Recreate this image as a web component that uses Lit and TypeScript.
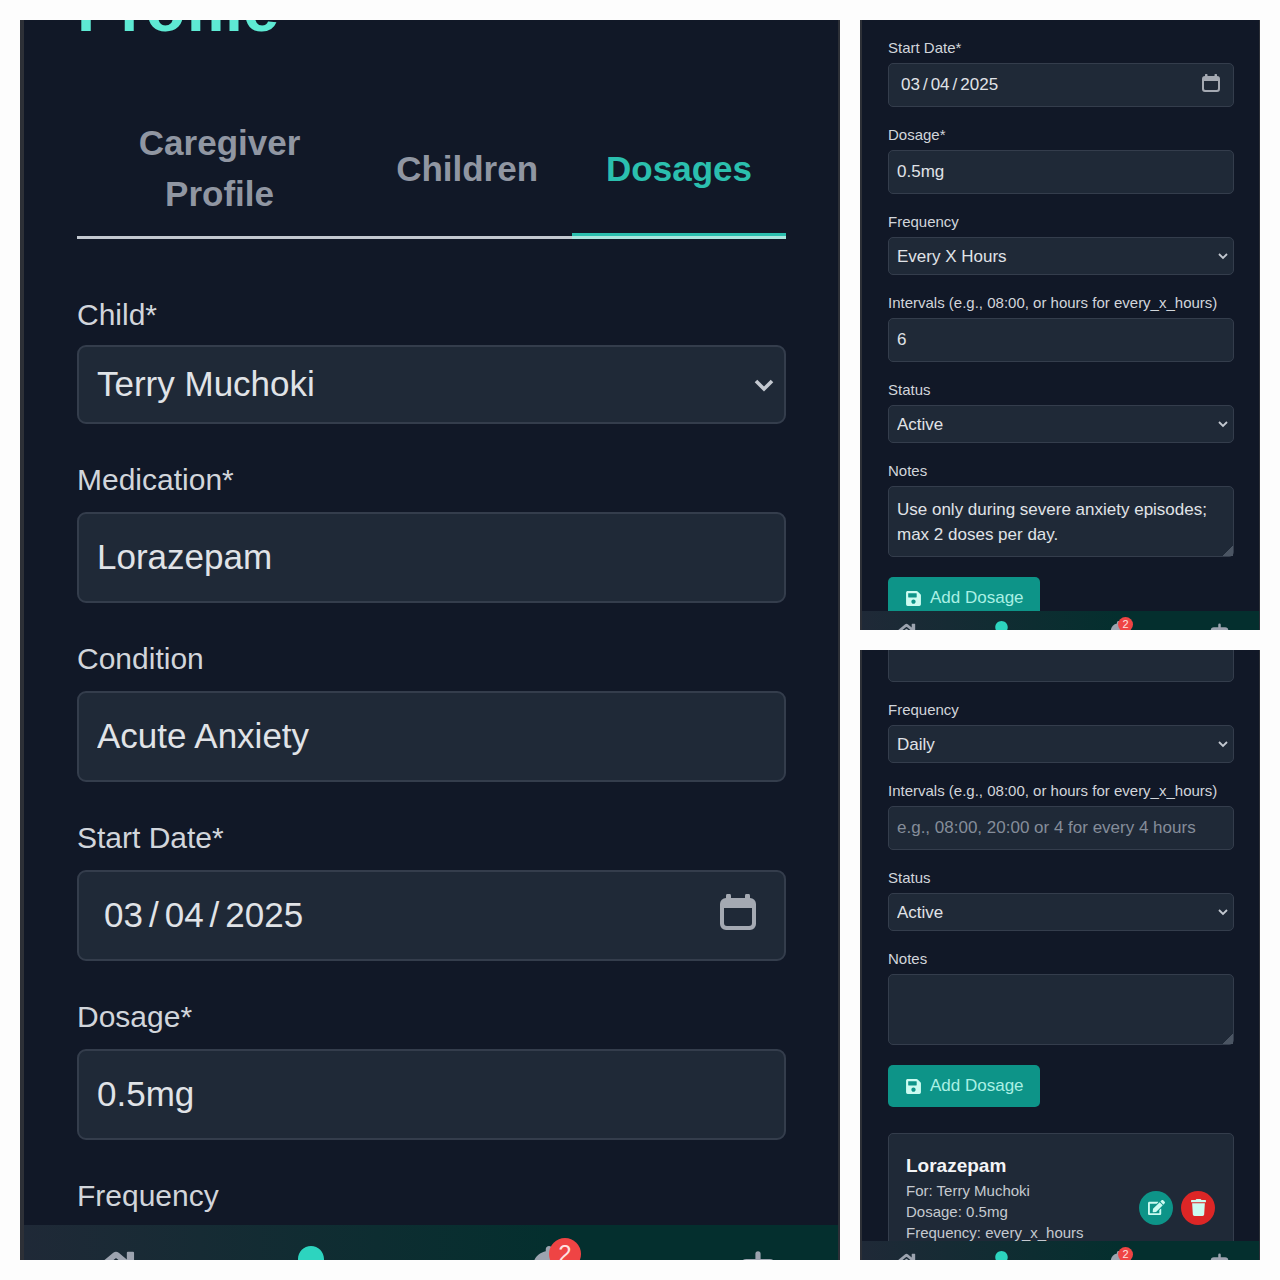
import { LitElement, html, css, nothing, type TemplateResult } from "lit";
import { customElement, property } from "lit/decorators.js";

interface Field {
  id: string;
  label: string;
  kind: "text" | "date" | "select" | "textarea";
  value?: string;
  placeholder?: string;
  hideLabel?: boolean;
}

const icon = (box: string, path: string, cls = "icon") => html`
  <svg class=${cls} viewBox=${box} aria-hidden="true"><path fill="currentColor" fill-rule="evenodd" d=${path} /></svg>
`;

const HOME =
  "M280.37 148.26L96 300.11V464a16 16 0 0 0 16 16l112.06-.29a16 16 0 0 0 15.92-16V368a16 16 0 0 1 16-16h64a16 16 0 0 1 16 16v95.64a16 16 0 0 0 16 16.05L464 480a16 16 0 0 0 16-16V300L295.67 148.26a12.19 12.19 0 0 0-15.3 0zM571.6 251.47L488 182.56V44.05a12 12 0 0 0-12-12h-56a12 12 0 0 0-12 12v72.61L318.47 43a48 48 0 0 0-61 0L4.34 251.47a12 12 0 0 0-1.6 16.9l25.5 31A12 12 0 0 0 45.15 301l235.22-193.74a12.19 12.19 0 0 1 15.3 0L530.9 301a12 12 0 0 0 16.9-1.6l25.5-31a12 12 0 0 0-1.7-16.93z";
const USER =
  "M224 256c70.7 0 128-57.3 128-128S294.7 0 224 0 96 57.3 96 128s57.3 128 128 128zm89.6 32h-16.7c-22.2 10.2-46.9 16-72.9 16s-50.6-5.8-72.9-16h-16.7C60.2 288 0 348.2 0 422.4V464c0 26.5 21.5 48 48 48h352c26.5 0 48-21.5 48-48v-41.6c0-74.2-60.2-134.4-134.4-134.4z";
const BELL =
  "M224 512c35.32 0 63.97-28.65 63.97-64H160.03c0 35.35 28.65 64 63.97 64zm215.39-149.71c-19.32-20.76-55.47-51.99-55.47-154.29 0-77.7-54.48-139.9-127.94-155.16V32c0-17.67-14.32-32-31.98-32s-31.98 14.33-31.98 32v20.84C118.56 68.1 64.08 130.3 64.08 208c0 102.3-36.15 133.53-55.47 154.29-6 6.45-8.66 14.16-8.61 21.71.11 16.4 12.98 32 32.1 32h383.8c19.12 0 32-15.6 32.1-32 .05-7.55-2.61-15.27-8.61-21.71z";
const ROBOT =
  "M32 224H64V416H32A32 32 0 0 1 0 384V256A32 32 0 0 1 32 224ZM544 176V448a64 64 0 0 1-64 64H160a64 64 0 0 1-64-64V176a80 80 0 0 1 80-80H288V32a32 32 0 0 1 64 0V96H464A80 80 0 0 1 544 176ZM264 256a40 40 0 1 0-80 0 40 40 0 1 0 80 0ZM456 256a40 40 0 1 0-80 0 40 40 0 1 0 80 0ZM192 384h64v32h-64ZM288 384h64v32h-64ZM384 384h64v32h-64ZM640 256V384a32 32 0 0 1-32 32H576V224h32A32 32 0 0 1 640 256Z";
const SAVE =
  "M433.941 129.941l-83.882-83.882A48 48 0 0 0 316.118 32H48C21.49 32 0 53.49 0 80v352c0 26.51 21.49 48 48 48h352c26.51 0 48-21.49 48-48V163.882a48 48 0 0 0-14.059-33.941zM224 416c-35.346 0-64-28.654-64-64 0-35.346 28.654-64 64-64s64 28.654 64 64c0 35.346-28.654 64-64 64zm96-304.52V212c0 6.627-5.373 12-12 12H76c-6.627 0-12-5.373-12-12V108c0-6.627 5.373-12 12-12h228.52c3.183 0 6.235 1.264 8.485 3.515l3.48 3.48A11.996 11.996 0 0 1 320 111.48z";
const EDIT =
  "M402.6 83.2l90.2 90.2c3.8 3.8 3.8 10 0 13.8L274.4 405.6l-92.8 10.3c-12.4 1.4-22.9-9.1-21.5-21.5l10.3-92.8L388.8 83.2c3.8-3.8 10-3.8 13.8 0zm162-22.9l-48.8-48.8c-15.2-15.2-39.9-15.2-55.2 0l-35.4 35.4c-3.8 3.8-3.8 10 0 13.8l90.2 90.2c3.8 3.8 10 3.8 13.8 0l35.4-35.4c15.2-15.3 15.2-40 0-55.2zM384 346.2V448H64V128h229.8c3.2 0 6.2-1.3 8.5-3.5l40-40c7.6-7.6 2.2-20.5-8.5-20.5H48C21.5 64 0 85.5 0 112v352c0 26.5 21.5 48 48 48h352c26.5 0 48-21.5 48-48V306.2c0-10.7-12.9-16-20.5-8.5l-40 40c-2.2 2.3-3.5 5.3-3.5 8.5z";
const TRASH =
  "M432 32H312l-9.4-18.7A24 24 0 0 0 281.1 0H166.8a23.72 23.72 0 0 0-21.4 13.3L136 32H16A16 16 0 0 0 0 48v32a16 16 0 0 0 16 16h416a16 16 0 0 0 16-16V48a16 16 0 0 0-16-16zM53.2 467a48 48 0 0 0 47.9 45h245.8a48 48 0 0 0 47.9-45L416 128H32z";
const CALENDAR =
  "M6 2a2 2 0 0 1 5 0V4H25V2a2 2 0 0 1 5 0V4a6 6 0 0 1 6 6V30a6 6 0 0 1-6 6H6a6 6 0 0 1-6-6V10a6 6 0 0 1 6-6ZM4 14V29a3 3 0 0 0 3 3H29a3 3 0 0 0 3-3V14Z";

/* One phone screen: a slot for scrolled content above the bottom bar. */
@customElement("phone-screen")
class PhoneScreen extends LitElement {
  static styles = css`
    :host {
      display: flex;
      flex-direction: column;
      min-width: 0;
      min-height: 0;
      overflow: hidden;
      box-sizing: border-box;
      background: #111827;
      border-style: solid;
      border-color: #2d3037;
      border-width: var(--edge);
    }
    .content {
      flex: 1;
      min-height: 0;
      overflow: hidden;
      padding: var(--page-pad);
    }
    .bar {
      flex: none;
      box-sizing: border-box;
      height: var(--bar-height);
      overflow: hidden;
      display: grid;
      grid-template-columns: 184fr 206fr 270fr 148fr;
      justify-items: center;
      align-items: start;
      padding: var(--bar-pad);
      background: linear-gradient(to right, #1f2937, #042f2e 65%);
    }
    .item {
      display: block;
      position: relative;
      color: #9ca3af;
    }
    .active {
      color: #2dd4bf;
    }
    .icon {
      display: block;
      width: var(--bar-icon);
      height: var(--bar-icon);
    }
    .badge {
      position: absolute;
      top: var(--badge-top);
      left: 50%;
      box-sizing: border-box;
      width: var(--badge);
      height: var(--badge);
      border-radius: 50%;
      background: #ef4444;
      color: #fee2e2;
      font-size: var(--badge-text);
      line-height: var(--badge);
      text-align: center;
    }
  `;

  render() {
    return html`
      <div class="content"><slot></slot></div>
      <nav class="bar" aria-label="Main">
        <a class="item" href="#home" aria-label="Home">${icon("0 0 576 512", HOME)}</a>
        <a class="item active" href="#profile" aria-label="Profile">${icon("0 0 448 512", USER)}</a>
        <a class="item" href="#alerts" aria-label="Alerts">${icon("0 0 448 512", BELL)}<span class="badge">2</span></a>
        <a class="item" href="#assistant" aria-label="Assistant">${icon("0 0 640 512", ROBOT)}</a>
      </nav>
    `;
  }
}

/* Stack of labelled form controls. */
@customElement("dosage-fields")
class DosageFields extends LitElement {
  @property({ attribute: false }) fields: Field[] = [];

  static styles = css`
    :host {
      display: grid;
      gap: var(--field-gap);
    }
    .field {
      display: grid;
      gap: var(--label-gap);
    }
    .field-select {
      gap: var(--select-label-gap);
    }
    .label {
      font-size: var(--label-size);
      line-height: var(--label-line);
      color: #d1d5db;
    }
    .control {
      display: grid;
      align-items: center;
    }
    .box {
      grid-area: 1 / 1;
      box-sizing: border-box;
      width: 100%;
      min-width: 0;
      height: var(--input-height);
      margin: 0;
      padding: 0 var(--input-pad) var(--text-lift);
      appearance: none;
      border: var(--line) solid #343d4c;
      border-radius: var(--radius);
      background: #1f2937;
      color: #e0e3e7;
      font-family: inherit;
      font-size: var(--input-size);
      outline: none;
    }
    .box::placeholder {
      color: #858d9a;
    }
    .select {
      height: var(--select-height);
    }
    .textarea {
      display: block;
      height: 71px;
      padding: 10px var(--input-pad) 8px;
      line-height: 25px;
      resize: vertical;
    }
    .textarea::-webkit-resizer {
      background: linear-gradient(135deg, transparent 65%, #4b5563 65%);
    }
    .date::-webkit-datetime-edit {
      padding: 0 var(--date-pad);
    }
    .date::-webkit-datetime-edit-text {
      padding: 0 var(--slash-pad);
    }
    .date::-webkit-calendar-picker-indicator {
      opacity: 0;
    }
    .chevron,
    .calendar {
      grid-area: 1 / 1;
      justify-self: end;
      pointer-events: none;
    }
    .chevron {
      width: var(--chevron);
      height: var(--chevron);
      margin-right: var(--chevron-right);
      color: #c3c8d0;
    }
    .calendar {
      width: var(--calendar);
      height: var(--calendar);
      margin-right: var(--calendar-right);
      margin-bottom: var(--calendar-lift);
      color: #a4a9b2;
    }
  `;

  private control(f: Field): TemplateResult {
    const name = f.hideLabel ? f.label : nothing;
    switch (f.kind) {
      case "select":
        return html`
          <select class="box select" id=${f.id}><option>${f.value}</option></select>
          <svg class="chevron" viewBox="0 0 20 20" aria-hidden="true">
            <path d="M2 6L10 14L18 6" fill="none" stroke="currentColor" stroke-width="3.6" />
          </svg>
        `;
      case "textarea":
        return html`<textarea class="box textarea" id=${f.id} .value=${f.value ?? ""}></textarea>`;
      case "date":
        return html`
          <input class="box date" id=${f.id} type="date" .value=${f.value ?? ""} />
          ${icon("0 0 36 36", CALENDAR, "calendar")}
        `;
      default:
        return html`<input class="box" id=${f.id} type="text" aria-label=${name}
          placeholder=${f.placeholder ?? nothing} .value=${f.value ?? ""} />`;
    }
  }

  render() {
    return this.fields.map(
      (f) => html`
        <div class=${f.kind === "select" ? "field field-select" : "field"}>
          ${f.hideLabel ? nothing : html`<label class="label" for=${f.id}>${f.label}</label>`}
          <div class="control">${this.control(f)}</div>
        </div>
      `
    );
  }
}

const INTERVALS = "Intervals (e.g., 08:00, or hours for every_x_hours)";

const profileFields: Field[] = [
  { id: "child", label: "Child*", kind: "select", value: "Terry Muchoki" },
  { id: "medication", label: "Medication*", kind: "text", value: "Lorazepam" },
  { id: "condition", label: "Condition", kind: "text", value: "Acute Anxiety" },
  { id: "start", label: "Start Date*", kind: "date", value: "2025-03-04" },
  { id: "dosage", label: "Dosage*", kind: "text", value: "0.5mg" },
];

const filledFields: Field[] = [
  { id: "start", label: "Start Date*", kind: "date", value: "2025-03-04" },
  { id: "dosage", label: "Dosage*", kind: "text", value: "0.5mg" },
  { id: "frequency", label: "Frequency", kind: "select", value: "Every X Hours" },
  { id: "intervals", label: INTERVALS, kind: "text", value: "6" },
  { id: "status", label: "Status", kind: "select", value: "Active" },
  { id: "notes", label: "Notes", kind: "textarea", value: "Use only during severe anxiety episodes; max 2 doses per day." },
];

const emptyFields: Field[] = [
  { id: "dosage", label: "Dosage", kind: "text", hideLabel: true },
  { id: "frequency", label: "Frequency", kind: "select", value: "Daily" },
  { id: "intervals", label: INTERVALS, kind: "text", placeholder: "e.g., 08:00, 20:00 or 4 for every 4 hours" },
  { id: "status", label: "Status", kind: "select", value: "Active" },
  { id: "notes", label: "Notes", kind: "textarea" },
];

@customElement("app-root")
class AppRoot extends LitElement {
  static styles = css`
    :host {
      display: grid;
      grid-template-columns: 41fr 20fr;
      grid-template-rows: 1fr 1fr;
      gap: 20px;
      box-sizing: border-box;
      height: 100vh;
      padding: 20px;
      background: #fdfdfd;
      font-family: "Liberation Sans", Arial, sans-serif;
    }
    .large {
      grid-row: 1 / 3;
      --edge: 0 2px 0 4px;
      --page-pad: 0 52px 0 53px;
      --bar-height: 35px;
      --bar-pad: 21px 6px 0 0;
      --bar-icon: 52px;
      --badge: 32px;
      --badge-top: -8px;
      --badge-text: 24px;
      --field-gap: 34px;
      --label-gap: 10px;
      --select-label-gap: 8px;
      --label-size: 30px;
      --label-line: 44px;
      --input-height: 91px;
      --select-height: 79px;
      --input-size: 35px;
      --input-pad: 18px;
      --text-lift: 2px;
      --line: 2px;
      --radius: 9px;
      --date-pad: 6px;
      --slash-pad: 5px;
      --chevron: 20px;
      --chevron-right: 12px;
      --calendar: 36px;
      --calendar-right: 30px;
      --calendar-lift: 8px;
    }
    .small {
      --edge: 0 1px 0 2px;
      --page-pad: 0 25px 0 26px;
      --bar-height: 19px;
      --bar-pad: 10px 3px 0 0;
      --bar-icon: 25px;
      --badge: 15px;
      --badge-top: -4px;
      --badge-text: 11px;
      --field-gap: 17px;
      --label-gap: 5px;
      --select-label-gap: 5px;
      --label-size: 15px;
      --label-line: 21px;
      --input-height: 44px;
      --select-height: 38px;
      --input-size: 17px;
      --input-pad: 8px;
      --text-lift: 0;
      --line: 1px;
      --radius: 5px;
      --date-pad: 3px;
      --slash-pad: 2px;
      --chevron: 10px;
      --chevron-right: 6px;
      --calendar: 18px;
      --calendar-right: 14px;
      --calendar-lift: 4px;
    }
    .title {
      margin: -47px 0 56px;
      font-size: 65px;
      line-height: 72px;
      color: #5eead4;
    }
    .tabs {
      display: grid;
      grid-template-columns: 1fr auto auto;
      margin-bottom: 54px;
      border-bottom: 3px solid #c3c8d0;
    }
    .tab {
      padding: 16px 34px 14px;
      border: 0;
      border-bottom: 3px solid transparent;
      background: none;
      color: #9096a2;
      font: bold 35px/51px "Liberation Sans", Arial, sans-serif;
    }
    .selected {
      color: #2bbfae;
      border-bottom-color: #2bbfae;
      box-shadow: 0 3px 0 #a9e6de;
    }
    .next-label {
      margin: 34px 0 0;
      font-size: 30px;
      line-height: 44px;
      color: #d1d5db;
    }
    .from-start {
      padding-top: 17px;
    }
    .scrolled {
      margin-top: -12px;
    }
    .add {
      display: flex;
      align-items: center;
      gap: 8px;
      height: 42px;
      margin-top: 20px;
      padding: 0 16px 0 17px;
      border: 0;
      border-radius: 5px;
      background: #0d9488;
      color: #a9f0e4;
      font-family: inherit;
      font-size: 17px;
    }
    .icon {
      display: block;
      flex: none;
      width: 17px;
      height: 17px;
      color: #ccfbf1;
    }
    .card {
      display: flex;
      align-items: center;
      justify-content: space-between;
      gap: 8px;
      margin-top: 26px;
      padding: 17px 18px 17px 17px;
      border: 1px solid #343d4c;
      border-radius: 5px;
      background: #1f2937;
    }
    .info {
      min-width: 0;
      padding-bottom: 21px;
    }
    .name {
      margin: 0;
      font-size: 19px;
      line-height: 29px;
      color: #f3f4f6;
    }
    .detail {
      margin: 0;
      font-size: 15px;
      line-height: 21px;
      color: #c5c9d0;
    }
    .actions {
      display: flex;
      gap: 8px;
    }
    .round {
      display: grid;
      place-items: center;
      width: 34px;
      height: 34px;
      padding: 0;
      border: 0;
      border-radius: 50%;
      background: #0d9488;
    }
    .danger {
      background: #dc2626;
    }
  `;

  private addButton() {
    return html`<button class="add" type="button">${icon("0 0 448 512", SAVE)}Add Dosage</button>`;
  }

  render() {
    return html`
      <phone-screen class="large">
        <h1 class="title">Profile</h1>
        <div class="tabs" role="tablist">
          <button class="tab" role="tab" aria-selected="false">Caregiver Profile</button>
          <button class="tab" role="tab" aria-selected="false">Children</button>
          <button class="tab selected" role="tab" aria-selected="true">Dosages</button>
        </div>
        <dosage-fields .fields=${profileFields}></dosage-fields>
        <p class="next-label">Frequency</p>
      </phone-screen>

      <phone-screen class="small">
        <div class="from-start">
          <dosage-fields .fields=${filledFields}></dosage-fields>
          ${this.addButton()}
        </div>
      </phone-screen>

      <phone-screen class="small">
        <div class="scrolled">
          <dosage-fields .fields=${emptyFields}></dosage-fields>
          ${this.addButton()}
          <article class="card">
            <div class="info">
              <h2 class="name">Lorazepam</h2>
              <p class="detail">For: Terry Muchoki</p>
              <p class="detail">Dosage: 0.5mg</p>
              <p class="detail">Frequency: every_x_hours</p>
            </div>
            <div class="actions">
              <button class="round" type="button" aria-label="Edit">${icon("0 0 576 512", EDIT)}</button>
              <button class="round danger" type="button" aria-label="Delete">${icon("0 0 448 512", TRASH)}</button>
            </div>
          </article>
        </div>
      </phone-screen>
    `;
  }
}
